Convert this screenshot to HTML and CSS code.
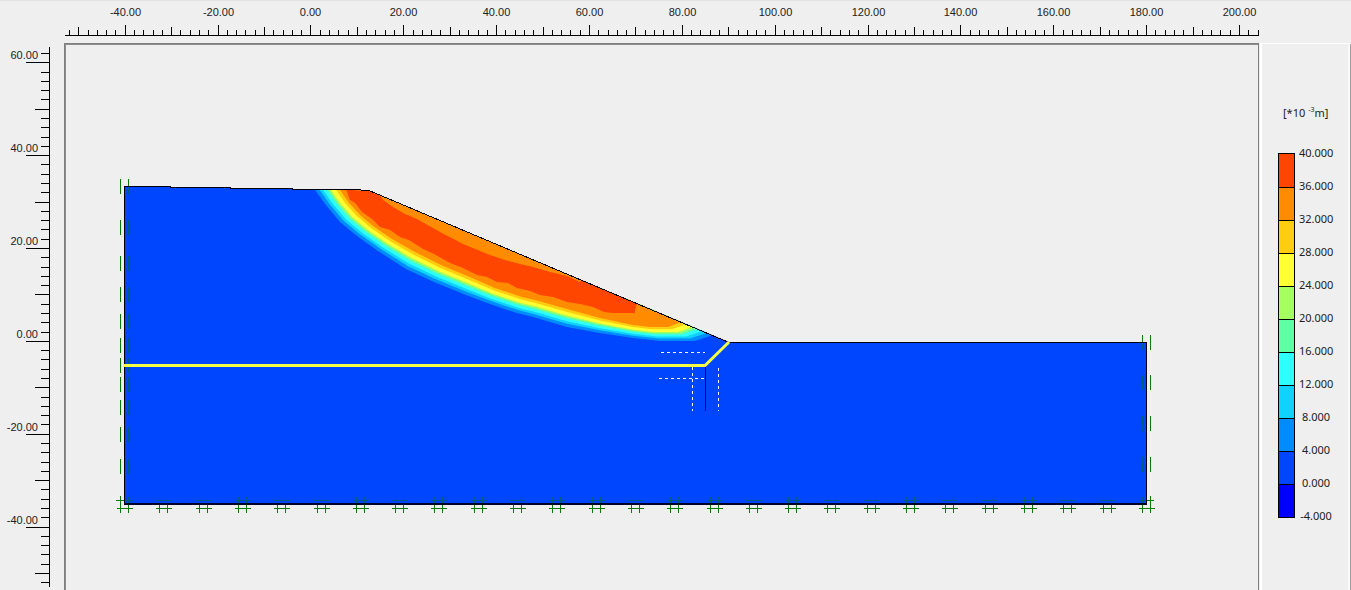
FILE: index.html
```html
<!DOCTYPE html>
<html lang="en">
<head>
<meta charset="utf-8">
<title>Displacement contours</title>
<link rel="stylesheet" href="styles.css">
</head>
<body>
<main class="viewer">
  <svg class="ruler-x" id="rulerX" role="img" aria-label="Horizontal ruler"></svg>
  <svg class="ruler-y" id="rulerY" role="img" aria-label="Vertical ruler"></svg>
  <section class="viewport">
    <svg class="plot" role="img" aria-label="Slope displacement contour plot">
      <g transform="translate(-66 -45)">
        <clipPath id="soil"><path d="M125 186 170 187 230 188 292 189 352 190 369 191 729 342 1147 342V504H125Z"/></clipPath>
        <g clip-path="url(#soil)">
          <path class="c0" d="M125 180H1147V504H125Z"/>
          <g id="bands"></g>
          <path class="c36" d="M345 186 350 200 355 203 362 212 372 219 380 227 390 230 400 237 409 240 423 249 434 254 450 263 463 268 477 275 487 277 497 282 508 283 517 288 530 291 540 295 553 297 567 302 580 304 593 307 604 312 613 313H635V310L637 303 585 277 580 282 567 276 550 272 533 267 520 264 505 260 490 255 463 244 440 232 417 219 405 214 393 207 383 200 378 192 369 186Z"/>
        </g>
        <g id="supports"></g>
        <path class="outline" d="M124.500 504V186.500H170V187.500H230V188.500H292V189.500H352L369 190.500 729 342.500H1146.500V504"/>
        <path class="base" d="M124 504H1147"/>
        <path class="pile" d="M705.500 366V411"/>
        <path class="dash" d="M661 352.500H705M659 378.500H704M692.500 367V411M718.500 368V411"/>
        <path class="layer" d="M123 365.500H705L729 342"/>
      </g>
    </svg>
  </section>
  <aside class="legend">
    <p class="unit">[*10 <sup>-3</sup>m]</p>
    <div class="scale">
      <ul class="swatches">
        <li class="b36"></li><li class="b32"></li><li class="b28"></li><li class="b24"></li>
        <li class="b20"></li><li class="b16"></li><li class="b12"></li><li class="b8"></li>
        <li class="b4"></li><li class="b0"></li><li class="bneg"></li>
      </ul>
      <ul class="values">
        <li>40.000</li><li>36.000</li><li>32.000</li><li>28.000</li>
        <li>24.000</li><li>20.000</li><li>16.000</li><li>12.000</li>
        <li>8.000</li><li>4.000</li><li>0.000</li><li>-4.000</li>
      </ul>
    </div>
  </aside>
</main>
<script src="plot.js"></script>
</body>
</html>
```
FILE: styles.css
```css
* {
  box-sizing: border-box;
}

body {
  margin: 0;
  background: #efefef;
  color: #222;
  font-family: "Liberation Sans", Arial, sans-serif;
  font-size: 11px;
}

.viewer {
  display: grid;
  grid-template-columns: 64px 1fr 91px;
  grid-template-rows: 42px 1fr;
  height: 100vh;
  border-top: 1px solid #e2e2e2;
  overflow: hidden;
}

.ruler-x,
.ruler-y,
.plot {
  display: block;
  overflow: hidden;
}

.ruler-x {
  grid-column: 2;
  grid-row: 1;
  width: calc(100% - 1px);
  height: 42px;
}

.ruler-y {
  grid-column: 1;
  grid-row: 2;
  width: 64px;
  height: calc(100% - 3px);
}

.tick {
  fill: none;
  stroke: #000;
  shape-rendering: crispEdges;
}

.ruler-x text {
  fill: #222;
  text-anchor: middle;
}

.ruler-y text {
  fill: #222;
  text-anchor: end;
}

.viewport {
  grid-column: 2;
  grid-row: 2;
  min-width: 0;
  min-height: 0;
  margin-right: 1px;
  padding: 1px 0 0 1px;
  border: solid #808080;
  border-width: 1px 1px 0 1px;
  box-shadow: inset 1px 1px #8c8c8c;
}

.plot {
  width: 100%;
  height: 100%;
}

.c0 { fill: #0046ff; }
.c4 { fill: #008cff; }
.c8 { fill: #0fd2ff; }
.c12 { fill: #2dffff; }
.c16 { fill: #5fffa5; }
.c20 { fill: #a5ff5f; }
.c24 { fill: #ffff32; }
.c28 { fill: #ffcd0f; }
.c32 { fill: #ff8c00; }
.c36 { fill: #ff4600; }

.outline {
  fill: none;
  stroke: #00000f;
  shape-rendering: crispEdges;
}

.base {
  stroke: #000028;
  stroke-width: 2;
}

.pile {
  stroke: #000050;
}

.dash {
  fill: none;
  stroke: #f5ffff;
  stroke-dasharray: 3 3;
}

.layer {
  fill: none;
  stroke: #f5ff46;
  stroke-width: 3;
}

.support {
  fill: none;
  stroke: #0a780a;
  shape-rendering: crispEdges;
}

.support-inner {
  fill: none;
  stroke: #005a82;
  shape-rendering: crispEdges;
}

.legend {
  grid-column: 3;
  grid-row: 2;
  padding: 61px 0 0 16px;
  border: solid #fff;
  border-width: 1px 0 0 2px;
  box-shadow: inset -1px 0 #a0a0a0, inset -3px 0 #fafafa;
  font-family: "Noto Sans", Tahoma, sans-serif;
}

.unit {
  margin: 0 0 32px 5px;
  line-height: 16px;
  white-space: nowrap;
}

.unit sup {
  font-size: 7px;
  line-height: 8px;
}

.scale {
  display: flex;
  align-items: flex-start;
  gap: 4px;
}

.swatches,
.values {
  margin: 0;
  padding: 0;
  list-style: none;
}

.swatches {
  width: 17px;
  border: 1px solid #000;
}

.swatches li {
  height: 33px;
}

.swatches li + li {
  border-top: 1px solid #000;
}

.values {
  width: 34px;
  margin-top: -9px;
  text-align: center;
}

.values li {
  height: 33px;
  line-height: 17px;
}

.b36 { background: #ff4600; }
.b32 { background: #ff8c00; }
.b28 { background: #ffcd0f; }
.b24 { background: #ffff32; }
.b20 { background: #a5ff5f; }
.b16 { background: #5fffa5; }
.b12 { background: #2dffff; }
.b8 { background: #0fd2ff; }
.b4 { background: #008cff; }
.b0 { background: #0046ff; }
.bneg { background: #0000ff; }
```
FILE: plot.js
```js
const SVG = "http://www.w3.org/2000/svg";
const SCALE = 4.643;

function add(parent, name, attrs, text) {
  const node = document.createElementNS(SVG, name);
  for (const key in attrs) node.setAttribute(key, attrs[key]);
  if (text !== undefined) node.textContent = text;
  parent.appendChild(node);
}

function rulerX() {
  const svg = document.getElementById("rulerX");
  const width = svg.getBoundingClientRect().width;
  const zero = 246.4;
  svg.replaceChildren();
  let d = `M1 34.5H${width}`;
  for (let v = -52; zero + v * SCALE < width; v += 2) {
    const x = Math.round(zero + v * SCALE) + 0.5;
    const top = v % 20 === 0 ? 24 : v % 10 === 0 ? 26 : 29;
    d += `M${x} ${top}V34`;
    if (v % 20 === 0 && x + 18 < width) add(svg, "text", { x, y: 15 }, v.toFixed(2));
  }
  add(svg, "path", { class: "tick", d });
}

function rulerY() {
  const svg = document.getElementById("rulerY");
  const height = svg.getBoundingClientRect().height;
  const zero = 297.8;
  svg.replaceChildren();
  let d = `M49.5 4V${height}`;
  for (let v = 62; zero - v * SCALE < height; v -= 2) {
    const y = Math.round(zero - v * SCALE) + 0.5;
    const left = v % 20 === 0 ? 26 : v % 10 === 0 ? 35 : 41;
    d += `M${left} ${y}H49`;
    if (v % 20 === 0) add(svg, "text", { x: 38, y: y - 3.5 }, v.toFixed(2));
  }
  add(svg, "path", { class: "tick", d });
}

/* Contour bands: interpolated between the slip surface and the inner zone. */
function bands() {
  const outer = [[313,187],[325,204],[340,222],[357,236],[378,251],[406,269],[434,282],[466,295],[490,304],[517,313],[533,317],[567,327],[600,333],[633,338],[660,341],[695,341],[716,334]];
  const inner = [[338,187],[349,203],[360,215],[373,226],[392,239],[415,252],[441,265],[472,278],[495,288],[522,297],[535,300],[567,309],[600,318],[633,325],[650,327],[668,327],[684,321]];
  const levels = [["c4",0],["c8",0.18],["c12",0.32],["c16",0.47],["c20",0.56],["c24",0.64],["c28",0.84],["c32",1]];
  const group = document.getElementById("bands");
  for (const [name, t] of levels) {
    const points = outer.map(([x, y], i) =>
      `${(x + (inner[i][0] - x) * t).toFixed(1)} ${(y + (inner[i][1] - y) * t).toFixed(1)}`);
    add(group, "path", { class: name, d: `M${points.join(" ")} L684 310 369 180Z` });
  }
}

function supports() {
  const group = document.getElementById("supports");
  let out = "M128.5 179V186M1142.5 335V342M116 500.5H124M120.5 496V504M1147 500.5H1154M1150.5 496V504";
  let inside = "";
  for (const y of [179, 220, 256, 287, 314, 338, 358, 377, 400, 427, 459]) {
    out += `M120.5 ${y}v15`;
    inside += `M128.5 ${Math.max(y, 187)}V${y + 15}`;
  }
  for (const y of [335, 375, 416, 457]) {
    out += `M1150.5 ${y}v15`;
    inside += `M1142.5 ${Math.max(y, 343)}V${y + 15}`;
  }
  for (let i = 0; i <= 26; i++) {
    const x = Math.round(120 + i * 39.3) + 0.5;
    out += `M${x} 504v9M${x + 8} 504v9M${x - 4} 508.5h16`;
    const from = Math.max(x - 4, 125);
    const to = Math.min(x + 12, 1146);
    inside += `M${from} 500.5H${to}`;
    if (x > 125) inside += `M${x} 497v6`;
    if (x + 8 < 1146) inside += `M${x + 8} 497v6`;
  }
  add(group, "path", { class: "support-inner", d: inside });
  add(group, "path", { class: "support", d: out });
}

function rulers() {
  rulerX();
  rulerY();
}

rulers();
bands();
supports();
window.addEventListener("resize", rulers);
```
